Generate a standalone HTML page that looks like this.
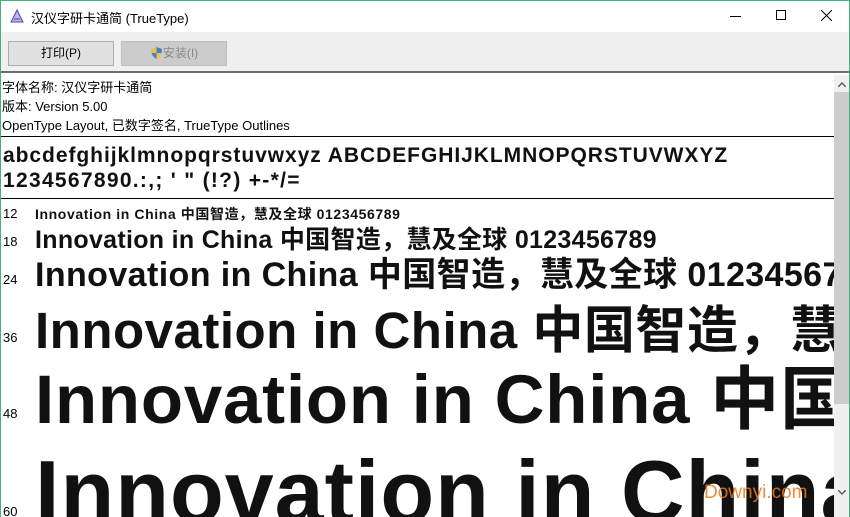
<!DOCTYPE html>
<html><head><meta charset="utf-8"><style>
*{margin:0;padding:0;box-sizing:border-box}
body{width:850px;height:517px;overflow:hidden;background:#fff;font-family:"Liberation Sans","Noto Sans CJK SC",sans-serif;position:relative}
.win{position:absolute;left:0;top:0;width:850px;height:517px;border:1px solid #3fb37a;border-bottom:none;overflow:hidden}
.title{position:absolute;left:0;top:0;width:848px;height:31px;background:#fff;font-size:13px;color:#000}
.tb{position:absolute;left:0;top:31px;width:848px;height:41px;background:#f0f0f0;border-bottom:2px solid #6d6d6d}
.btn{position:absolute;top:9px;height:25px;border:1px solid #adadad;background:#e1e1e1;font-size:12px;text-align:center;line-height:23px}
.info{position:absolute;left:1px;font-size:13px;color:#000;white-space:nowrap}
.hl{position:absolute;left:0;width:833px;height:1px;background:#000}
.row{position:absolute;left:34px;white-space:nowrap;font-weight:bold;line-height:1;color:#111}
.num{position:absolute;left:2px;font-size:13px;color:#000}
.content{position:absolute;left:0;top:74px;width:833px;height:443px;overflow:hidden}
.sb{position:absolute;left:833px;top:74px;width:16px;height:443px;background:#f0f0f0}
</style></head><body><div class="win">
<div class="title">
<svg style="position:absolute;left:9px;top:8px" width="14" height="14" viewBox="0 0 14 14"><path d="M7 1 L1 13 L13 13 Z" fill="#b7b7e8" stroke="#4a4aa8" stroke-width="1"/><path d="M4 10 L10 10" stroke="#4a4aa8"/></svg>
<span style="position:absolute;left:30px;top:7px">汉仪字研卡通简 (TrueType)</span>
<div style="position:absolute;left:729px;top:15px;width:11px;height:1px;background:#000"></div>
<div style="position:absolute;left:775px;top:9px;width:10px;height:10px;border:1px solid #000"></div>
<svg style="position:absolute;left:820px;top:9px" width="11" height="11"><path d="M0 0L11 11M11 0L0 11" stroke="#000" stroke-width="1"/></svg>
</div>
<div class="tb">
<div class="btn" style="left:7px;width:106px">打印(P)</div>
<div class="btn" style="left:120px;width:106px;color:#8a8a8a;background:#ccc;border-color:#bfbfbf"><svg style="vertical-align:-3px" width="13" height="14" viewBox="0 0 13 14"><path d="M6.5 1 L12 3 L11 9 Q9 12 6.5 13 Q4 12 2 9 L1 3 Z" fill="#e8c04a"/><path d="M6.5 1 L12 3 L11.5 7 L6.5 7 Z M6.5 7 L1.5 7 Q2 10 6.5 13 Z" fill="#4a7ec8"/></svg>安装(I)</div>
</div>
<div class="content">
<div class="info" style="top:2px">字体名称: 汉仪字研卡通简</div>
<div class="info" style="top:21px">版本: Version 5.00</div>
<div class="info" style="top:40px">OpenType Layout, 已数字签名, TrueType Outlines</div>
<div class="hl" style="top:61px"></div>
<div class="row" style="left:2px;top:70px;font-size:21px;letter-spacing:0.95px">abcdefghijklmnopqrstuvwxyz ABCDEFGHIJKLMNOPQRSTUVWXYZ</div>
<div class="row" style="left:2px;top:95px;font-size:21px;letter-spacing:1.3px">1234567890.:,; ' " (!?) +-*/=</div>
<div class="hl" style="top:123px"></div>
<div class="num" style="top:131px">12</div>
<div class="row" style="top:132px;font-size:14px;letter-spacing:0.6px">Innovation in China 中国智造，慧及全球 0123456789</div>
<div class="num" style="top:159px">18</div>
<div class="row" style="top:153px;font-size:25px;letter-spacing:0.3px">Innovation in China 中国智造，慧及全球 0123456789</div>
<div class="num" style="top:197px">24</div>
<div class="row" style="top:183px;font-size:34px;letter-spacing:0.4px">Innovation in China 中国智造，慧及全球 0123456789</div>
<div class="num" style="top:255px">36</div>
<div class="row" style="top:230px;font-size:51px;letter-spacing:0.5px">Innovation in China 中国智造，慧及全球</div>
<div class="num" style="top:331px">48</div>
<div class="row" style="top:290px;font-size:69px;letter-spacing:0.8px">Innovation in China 中国智造</div>
<div class="num" style="top:429px">60</div>
<div class="row" style="top:373px;font-size:88px;letter-spacing:1px">Innovation in China</div>
<div style="position:absolute;left:703px;top:407px;font-size:19px;color:#f07a1a;opacity:.85">Downyi.com</div>
</div>
<div class="sb">
<svg style="position:absolute;left:4px;top:7px" width="8" height="5"><path d="M0 5L4 1L8 5" stroke="#606060" fill="none" stroke-width="1.5"/></svg>
<div style="position:absolute;left:0;top:17px;width:16px;height:312px;background:#cdcdcd"></div>
<svg style="position:absolute;left:4px;top:415px" width="8" height="5"><path d="M0 0L4 4L8 0" stroke="#606060" fill="none" stroke-width="1.5"/></svg>
</div>
</div></body></html>
